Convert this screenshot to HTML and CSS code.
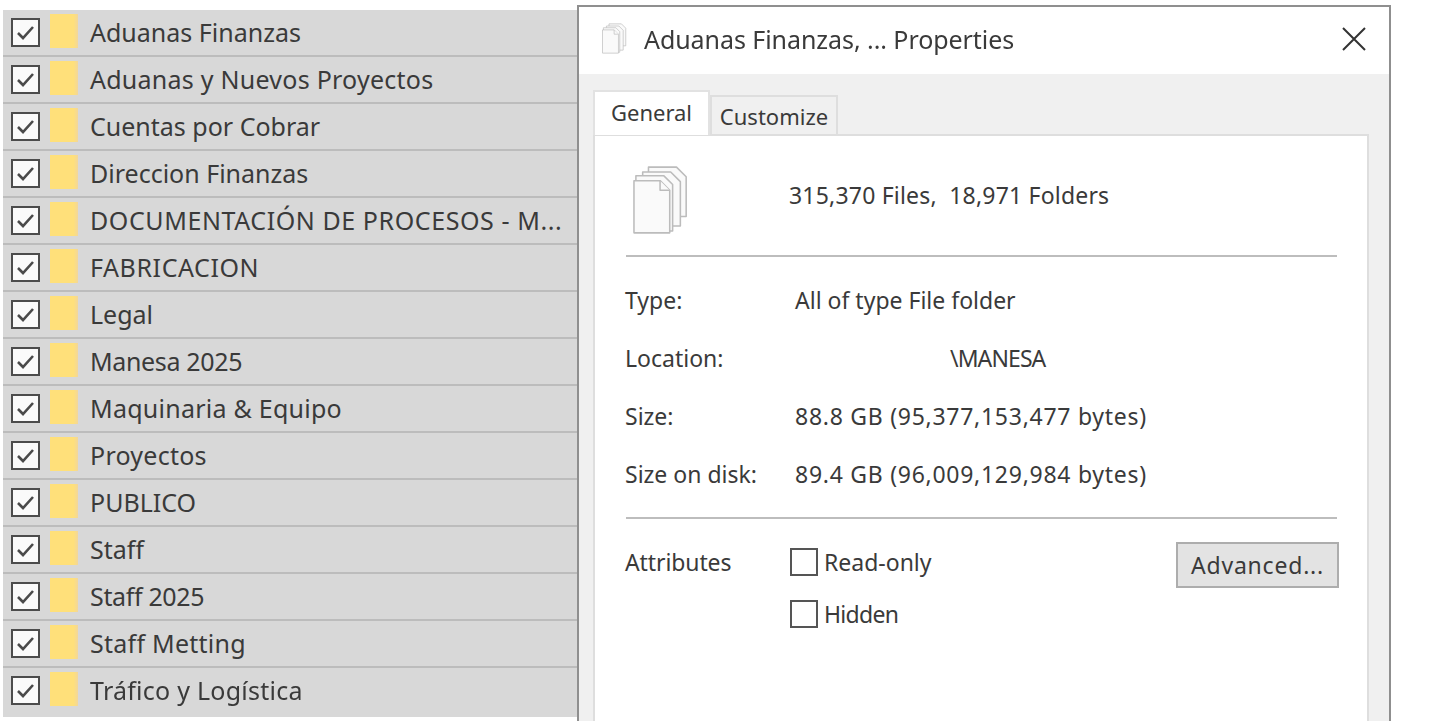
FILE: index.html
```html
<!DOCTYPE html>
<html lang="es">
<head>
<meta charset="utf-8">
<title>Aduanas Finanzas, ... Properties</title>
<link rel="stylesheet" href="styles.css">
</head>
<body>
<svg class="defs" width="0" height="0" aria-hidden="true">
  <symbol id="tick" viewBox="0 0 25 25"><path d="M5 13l5 5 10-11" fill="none" stroke="#4a4a4a" stroke-width="2.6"/></symbol>
  <symbol id="pages" viewBox="0 0 60 72">
    <g fill="#fafafa" stroke="#bcbcbc" stroke-width="1.6" stroke-linejoin="round">
      <path d="M16 2h29l10 10v41H16z"/>
      <path d="M10 7h29l10 10v46H10z"/>
      <path d="M3 11h29l9 9v48H3z"/>
      <path d="M1 16h27l10 10v44H1z"/>
      <path d="M28 16v10h10"/>
    </g>
  </symbol>
</svg>
<main class="page">
  <ul class="list">
    <li class="row"><span class="check"><svg class="tick"><use href="#tick"/></svg></span><span class="folder"></span><span class="name">Aduanas Finanzas</span></li>
    <li class="row"><span class="check"><svg class="tick"><use href="#tick"/></svg></span><span class="folder"></span><span class="name wide">Aduanas y Nuevos Proyectos</span></li>
    <li class="row"><span class="check"><svg class="tick"><use href="#tick"/></svg></span><span class="folder"></span><span class="name">Cuentas por Cobrar</span></li>
    <li class="row"><span class="check"><svg class="tick"><use href="#tick"/></svg></span><span class="folder"></span><span class="name">Direccion Finanzas</span></li>
    <li class="row"><span class="check"><svg class="tick"><use href="#tick"/></svg></span><span class="folder"></span><span class="name wider">DOCUMENTACIÓN DE PROCESOS - M...</span></li>
    <li class="row"><span class="check"><svg class="tick"><use href="#tick"/></svg></span><span class="folder"></span><span class="name wider">FABRICACION</span></li>
    <li class="row"><span class="check"><svg class="tick"><use href="#tick"/></svg></span><span class="folder"></span><span class="name">Legal</span></li>
    <li class="row"><span class="check"><svg class="tick"><use href="#tick"/></svg></span><span class="folder"></span><span class="name tight">Manesa 2025</span></li>
    <li class="row"><span class="check"><svg class="tick"><use href="#tick"/></svg></span><span class="folder"></span><span class="name wide">Maquinaria &amp; Equipo</span></li>
    <li class="row"><span class="check"><svg class="tick"><use href="#tick"/></svg></span><span class="folder"></span><span class="name wide">Proyectos</span></li>
    <li class="row"><span class="check"><svg class="tick"><use href="#tick"/></svg></span><span class="folder"></span><span class="name">PUBLICO</span></li>
    <li class="row"><span class="check"><svg class="tick"><use href="#tick"/></svg></span><span class="folder"></span><span class="name">Staff</span></li>
    <li class="row"><span class="check"><svg class="tick"><use href="#tick"/></svg></span><span class="folder"></span><span class="name tight">Staff 2025</span></li>
    <li class="row"><span class="check"><svg class="tick"><use href="#tick"/></svg></span><span class="folder"></span><span class="name wide">Staff Metting</span></li>
    <li class="row"><span class="check"><svg class="tick"><use href="#tick"/></svg></span><span class="folder"></span><span class="name wide">Tráfico y Logística</span></li>
  </ul>
  <section class="dialog">
    <header class="titlebar">
      <svg class="title-icon"><use href="#pages"/></svg>
      <h1 class="title">Aduanas Finanzas, ... Properties</h1>
      <svg class="close" viewBox="0 0 24 24"><path d="M1 1l22 22M23 1L1 23" stroke="#333" stroke-width="2" fill="none"/></svg>
    </header>
    <div class="body">
      <div class="tabs">
        <span class="tab active">General</span>
        <span class="tab">Customize</span>
      </div>
      <div class="panel">
        <div class="summary">
          <svg class="big-icon"><use href="#pages"/></svg>
          <span class="count">315,370 Files,  18,971 Folders</span>
        </div>
        <hr class="rule">
        <dl class="props">
          <dt>Type:</dt><dd>All of type File folder</dd>
          <dt>Location:</dt><dd class="location">\MANESA</dd>
          <dt>Size:</dt><dd class="digits">88.8 GB (95,377,153,477 bytes)</dd>
          <dt>Size on disk:</dt><dd class="digits">89.4 GB (96,009,129,984 bytes)</dd>
        </dl>
        <hr class="rule second">
        <div class="attrs">
          <span class="attr-label">Attributes</span>
          <div class="attr-options">
            <label class="option"><span class="box"></span>Read-only</label>
            <label class="option narrow"><span class="box"></span>Hidden</label>
          </div>
          <button class="advanced" type="button">Advanced...</button>
        </div>
      </div>
    </div>
  </section>
</main>
</body>
</html>
```

FILE: styles.css
```css
* { box-sizing: border-box; }
html, body { margin: 0; height: 100%; background: #fff; overflow: hidden; }
.defs { position: absolute; }
.page {
  display: flex;
  align-items: flex-start;
  height: 721px;
  overflow: hidden;
  font-family: "Noto Sans", "Open Sans", sans-serif;
  color: #3a3a3a;
  filter: blur(0.6px);
}
.list {
  list-style: none;
  margin: 10px 0 0 3px;
  padding: 0;
  width: 574px;
  height: 707px;
  display: grid;
  grid-template-rows: repeat(14, 47px) 49px;
  background: #d8d8d8;
}
.row {
  display: flex;
  align-items: flex-start;
  padding: 8px 0 0 8px;
  border-bottom: 2px solid #bcbcbc;
}
.row:last-child { border-bottom: 0; }
.check {
  width: 29px;
  height: 29px;
  background: #fafafa;
  border: 2px solid #4c4c4c;
  flex: none;
  display: flex;
}
.tick { width: 100%; height: 100%; }
.folder {
  width: 28px;
  height: 34px;
  margin: -4px 0 0 10px;
  flex: none;
  background: linear-gradient(90deg, #ffe07a 0 84%, #f2d79a 100%);
}
.name {
  margin: -3px 0 0 12px;
  font-size: 25px;
  line-height: 34px;
  white-space: nowrap;
  color: #3a3a3a;
}
.wide { letter-spacing: 0.25px; }
.wider { letter-spacing: 0.58px; }
.tight { letter-spacing: -0.35px; }
.dialog {
  margin-top: 5px;
  width: 814px;
  height: 730px;
  flex: none;
  background: #fff;
  border: 2px solid #8f8f8f;
  display: flex;
  flex-direction: column;
}
.titlebar {
  height: 67px;
  flex: none;
  display: flex;
  align-items: center;
  padding: 0 22px 4px;
}
.title-icon { width: 28px; height: 31px; flex: none; }
.title { margin: 0 0 0 15px; font-size: 25px; font-weight: 400; flex: 1; white-space: nowrap; letter-spacing: -0.06px; }
.close { width: 24px; height: 24px; flex: none; margin-right: 1px; }
.body {
  flex: 1;
  background: #f0f0f0;
  padding: 14px 20px 0 14px;
  display: flex;
  flex-direction: column;
}
.tabs { display: flex; align-items: flex-end; height: 46px; flex: none; }
.tab {
  width: 128px;
  height: 39px;
  display: flex;
  align-items: center;
  justify-content: center;
  font-size: 22px;
  border: 2px solid #dedede;
  border-bottom: 0;
  background: #f0f0f0;
}
.tab.active {
  width: 117px;
  height: 45px;
  background: #fff;
  border-color: #e2e2e2;
  padding-bottom: 3px;
  margin-bottom: -1px;
  position: relative;
}
.panel {
  flex: 1;
  background: #fff;
  border: 2px solid #dedede;
  padding: 0 30px 0 31px;
}
.summary { height: 119px; display: flex; align-items: center; padding-left: 7px; }
.big-icon { width: 58px; height: 70px; flex: none; margin-top: 8px; }
.count { margin: 0 0 2px 98px; font-size: 23px; white-space: pre; letter-spacing: 0.2px; }
.rule { margin: 0; border: 0; border-top: 2px solid #bdbdbd; }
.props {
  margin: 0 0 0 -1px;
  padding-top: 14px;
  display: grid;
  grid-template-columns: 170px 1fr;
  grid-auto-rows: 58px;
  font-size: 23px;
  align-items: center;
}
.props dt, .props dd { margin: 0; white-space: nowrap; }
.location { padding-left: 155px; letter-spacing: -0.9px; }
.digits { letter-spacing: 0.73px; }
.second { margin-top: 14px; }
.attrs { display: flex; align-items: flex-start; padding-top: 23px; font-size: 23px; }
.attr-label { width: 165px; margin-left: -1px; line-height: 40px; flex: none; letter-spacing: -0.1px; }
.attr-options { display: flex; flex-direction: column; gap: 24px; flex: 1; padding-top: 6px; }
.option { display: flex; align-items: center; gap: 6px; height: 28px; }
.narrow { letter-spacing: -0.7px; }
.box { width: 28px; height: 28px; border: 2px solid #555; background: #fff; flex: none; }
.advanced {
  width: 163px;
  height: 46px;
  margin-right: -2px;
  background: #e3e3e3;
  border: 2px solid #adadad;
  font: inherit;
  letter-spacing: 0.8px;
  color: #3a3a3a;
  padding: 0;
}
```
